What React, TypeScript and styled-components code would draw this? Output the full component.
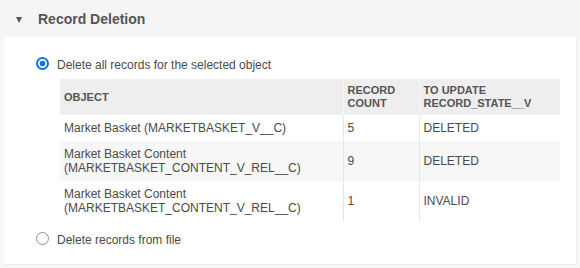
import React from "react";
import styled, { createGlobalStyle } from "styled-components";

const Global = createGlobalStyle`
  html, body {
    margin: 0;
    padding: 0;
    background: #f7f7f7;
    font-family: "Liberation Sans", Arial, sans-serif;
    color: #444;
  }
`;

const Section = styled.section`
  width: 580px;
  height: 268px;
  background: #f7f7f7;
`;

const Header = styled.div`
  height: 37px;
  display: flex;
  align-items: center;
  padding-left: 16px;
  gap: 16px;
  background: #f5f5f5;
`;

const Caret = styled.span`
  width: 0;
  height: 0;
  border-left: 3.5px solid transparent;
  border-right: 3.5px solid transparent;
  border-top: 6px solid #555;
  margin-top: 3px;
`;

const Title = styled.h2`
  margin: 0;
  font-size: 14px;
  font-weight: bold;
  color: #555;
`;

const Panel = styled.div`
  margin: 0 4px;
  background: #fff;
  padding: 20px 32px 16px;
  box-shadow: 1px 1px 1px rgba(0, 0, 0, 0.04);
`;

const Option = styled.label`
  display: flex;
  align-items: flex-start;
  gap: 8px;
  font-size: 12px;
  line-height: 16px;
  color: #4a4a4a;
`;

const Radio = styled.input`
  appearance: none;
  margin: 0;
  width: 13px;
  height: 13px;
  border-radius: 50%;
  border: 1px solid #8f8f8f;
  background: #fff;
  box-sizing: border-box;
  &:checked {
    border: 2px solid #0b72e7;
    background: radial-gradient(circle, #0b72e7 0 2.6px, #fff 3.2px);
  }
`;

const TableWrap = styled.div`
  margin: 6px 0 11px 24px;
`;

const Table = styled.table`
  width: 500px;
  border-collapse: collapse;
  table-layout: fixed;
  font-size: 12px;
  color: #4a4a4a;
`;

const Th = styled.th`
  background: #eeeeee;
  text-align: left;
  font-size: 11px;
  font-weight: bold;
  line-height: 13px;
  color: #555;
  padding: 5px 4px;
  vertical-align: middle;
  & + & {
    border-left: 1px solid #f7f7f7;
  }
`;

const Row = styled.tr<{ $striped?: boolean }>`
  background: ${(p) => (p.$striped ? "#f7f7f7" : "#fff")};
`;

const Td = styled.td`
  padding: 6px 4px;
  line-height: 14px;
  vertical-align: middle;
  & + & {
    border-left: 1px solid #e6e6e6;
  }
`;

const rows = [
  { obj: ["Market Basket (MARKETBASKET_V__C)"], count: "5", state: "DELETED" },
  { obj: ["Market Basket Content", "(MARKETBASKET_CONTENT_V_REL__C)"], count: "9", state: "DELETED" },
  { obj: ["Market Basket Content", "(MARKETBASKET_CONTENT_V_REL__C)"], count: "1", state: "INVALID" },
];

export default function App() {
  return (
    <>
      <Global />
      <Section>
        <Header>
          <Caret />
          <Title>Record Deletion</Title>
        </Header>
        <Panel>
          <Option>
            <Radio type="radio" name="mode" defaultChecked />
            Delete all records for the selected object
          </Option>
          <TableWrap>
            <Table>
              <colgroup>
                <col style={{ width: 283 }} />
                <col style={{ width: 76 }} />
                <col style={{ width: 141 }} />
              </colgroup>
              <thead>
                <tr>
                  <Th>OBJECT</Th>
                  <Th>RECORD<br />COUNT</Th>
                  <Th>TO UPDATE<br />RECORD_STATE__V</Th>
                </tr>
              </thead>
              <tbody>
                {rows.map((r, i) => (
                  <Row key={i} $striped={i % 2 === 1}>
                    <Td>
                      {r.obj.map((l, j) => (
                        <React.Fragment key={j}>
                          {j > 0 && <br />}
                          {l}
                        </React.Fragment>
                      ))}
                    </Td>
                    <Td>{r.count}</Td>
                    <Td>{r.state}</Td>
                  </Row>
                ))}
              </tbody>
            </Table>
          </TableWrap>
          <Option>
            <Radio type="radio" name="mode" />
            Delete records from file
          </Option>
        </Panel>
      </Section>
    </>
  );
}
